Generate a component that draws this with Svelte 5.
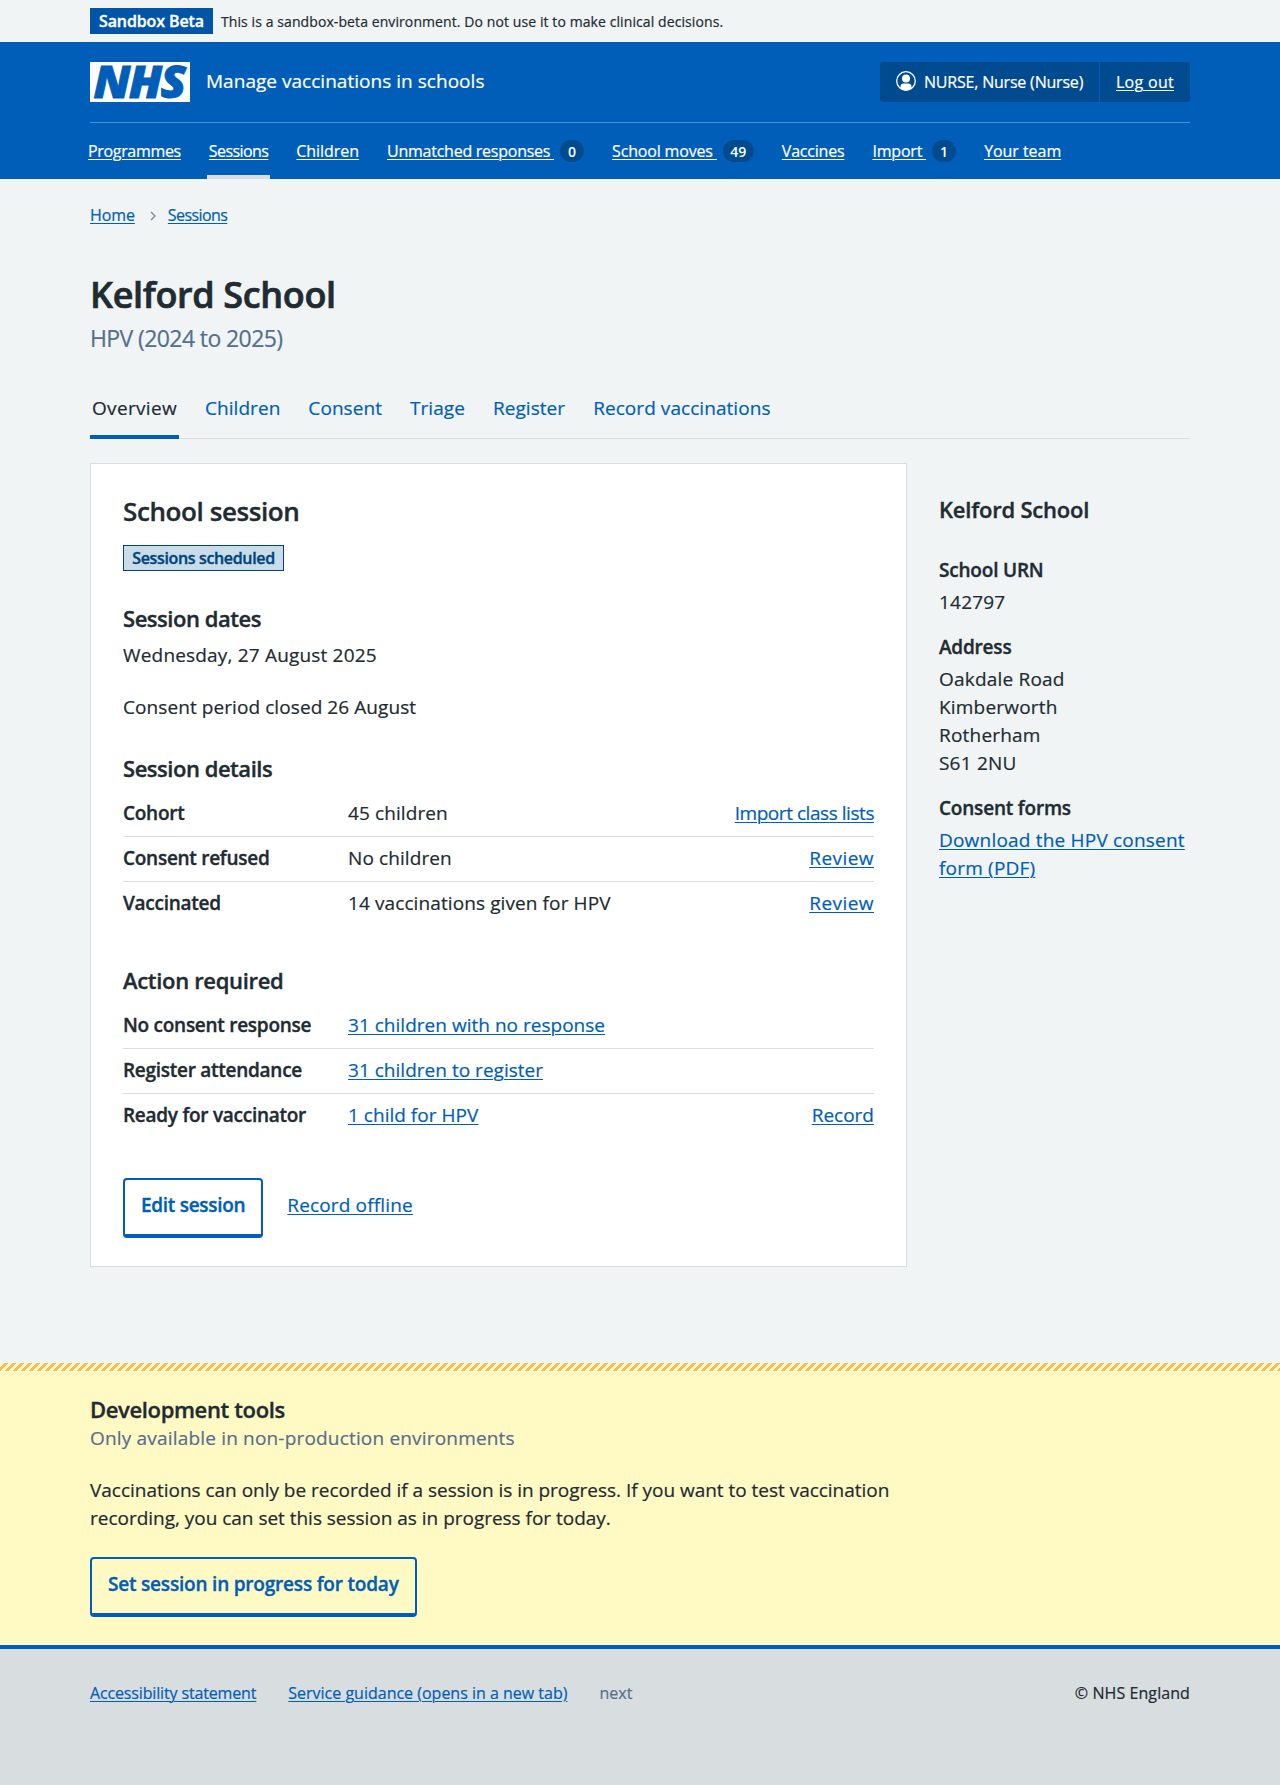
<script>
  const nav = [
    { label: 'Programmes', spacing: -0.33 },
    { label: 'Sessions', current: true, spacing: -0.58 },
    { label: 'Children', spacing: -0.05 },
    { label: 'Unmatched responses', count: 0, spacing: -0.25 },
    { label: 'School moves', count: 49, spacing: -0.17 },
    { label: 'Vaccines', spacing: -0.2 },
    { label: 'Import', count: 1, spacing: -0.2 },
    { label: 'Your team', spacing: -0.05 },
  ];

  const tabs = ['Overview', 'Children', 'Consent', 'Triage', 'Register', 'Record vaccinations'];

  const details = [
    { key: 'Cohort', value: '45 children', action: 'Import class lists', spacing: -0.45 },
    { key: 'Consent refused', value: 'No children', action: 'Review', spacing: 0.45 },
    { key: 'Vaccinated', value: '14 vaccinations given for HPV', action: 'Review', spacing: 0.45 },
  ];

  const actions = [
    { key: 'No consent response', link: '31 children with no response' },
    { key: 'Register attendance', link: '31 children to register' },
    { key: 'Ready for vaccinator', link: '1 child for HPV', action: 'Record', spacing: 0 },
  ];

  const address = ['Oakdale Road', 'Kimberworth', 'Rotherham', 'S61 2NU'];
</script>

{#snippet summary(rows)}
  <dl class="summary">
    {#each rows as row}
      <div class="row">
        <dt>{row.key}</dt>
        <dd>
          {#if row.link}<a href="#top">{row.link}</a>{:else}{row.value}{/if}
        </dd>
        {#if row.action}
          <dd class="action"><a href="#top" style="letter-spacing: {row.spacing}px">{row.action}</a></dd>
        {/if}
      </div>
    {/each}
  </dl>
{/snippet}

<div class="environment">
  <div class="container env-inner">
    <strong class="env-tag">Sandbox Beta</strong>
    <span class="env-text">This is a sandbox-beta environment. Do not use it to make clinical decisions.</span>
  </div>
</div>

<header>
  <div class="container">
    <div class="masthead">
      <svg class="logo" viewBox="0 0 100 40" role="img" aria-label="NHS">
        <rect width="100" height="40" fill="#fff" />
        <text class="logo-text" x="3.500" y="36" textLength="91" lengthAdjust="spacingAndGlyphs">NHS</text>
      </svg>
      <span class="service">Manage vaccinations in schools</span>
      <div class="account">
        <span class="user">
          <svg width="20" height="20" viewBox="0 0 20 20" aria-hidden="true">
            <circle cx="10" cy="10" r="9.3" fill="none" stroke="#fff" stroke-width="1.3" />
            <circle cx="10" cy="7.5" r="4" fill="#fff" />
            <path d="M4.500 17.500v-1.700c0-2 1.300-3.200 3.200-3.200h4.600c1.900 0 3.200 1.200 3.200 3.200v1.700c-3 2.600-8 2.600-11 0z" fill="#fff" />
          </svg>
          NURSE, Nurse (Nurse)
        </span>
        <span class="logout"><a href="#top">Log out</a></span>
      </div>
    </div>
    <nav class="primary">
      {#each nav as item}
        <div class="nav-item" class:current={item.current}>
          <a href="#top" style="letter-spacing: {item.spacing}px">{item.label}{item.count !== undefined ? '\u00a0' : ''}</a>
          {#if item.count !== undefined}<span class="badge">{item.count}</span>{/if}
        </div>
      {/each}
    </nav>
  </div>
</header>

<div class="container">
  <nav class="breadcrumb">
    <a href="#top">Home</a>
    <svg width="6" height="10" viewBox="0 0 6 10" aria-hidden="true">
      <path d="M1 1l4 4-4 4" fill="none" stroke="#768692" stroke-width="1.3" />
    </svg>
    <a href="#top" class="crumb-last">Sessions</a>
  </nav>

  <main>
    <h1>Kelford School</h1>
    <p class="caption">HPV (2024 to 2025)</p>

    <nav class="tabs">
      {#each tabs as tab, i}
        <a href="#top" class:selected={i === 0}>{tab}</a>
      {/each}
    </nav>

    <div class="columns">
      <section class="card">
        <h2>School session</h2>
        <strong class="tag">Sessions scheduled</strong>

        <h3 class="dates-title">Session dates</h3>
        <p class="date">Wednesday, 27 August 2025</p>
        <p class="period">Consent period closed 26 August</p>

        <h3>Session details</h3>
        {@render summary(details)}

        <h3 class="action-title">Action required</h3>
        {@render summary(actions)}

        <div class="buttons">
          <button class="edit">Edit session</button>
          <a href="#top">Record offline</a>
        </div>
      </section>

      <aside>
        <h3>Kelford School</h3>
        <dl>
          <dt>School URN</dt>
          <dd>142797</dd>
          <dt>Address</dt>
          <dd>
            {#each address as line}<div>{line}</div>{/each}
          </dd>
          <dt>Consent forms</dt>
          <dd><a href="#top">Download the HPV consent form (PDF)</a></dd>
        </dl>
      </aside>
    </div>
  </main>
</div>

<section class="devtools">
  <div class="container">
    <h3>Development tools</h3>
    <p class="muted">Only available in non-production environments</p>
    <p class="explain">
      Vaccinations can only be recorded if a session is in progress. If you want to test vaccination recording, you can
      set this session as in progress for today.
    </p>
    <button>Set session in progress for today</button>
  </div>
</section>

<footer>
  <div class="container footer-inner">
    <a href="#top" class="statement">Accessibility statement</a>
    <a href="#top">Service guidance (opens in a new tab)</a>
    <span class="version">next</span>
    <span class="copyright">© NHS England</span>
  </div>
</footer>

<style>
  :global(body) {
    background: #f0f4f5;
    color: #212b32;
    font: 400 19px/28px 'Open Sans', 'Noto Sans', sans-serif;
    -webkit-text-stroke: 0.2px;
  }
  :global(*) {
    box-sizing: border-box;
  }
  h1,
  h2,
  h3,
  p,
  dl,
  dd {
    margin: 0;
  }
  a {
    color: #005eb8;
    text-decoration-thickness: 1px;
    text-underline-offset: 2px;
  }
  .container {
    width: 1100px;
    margin: 0 auto;
  }

  .env-inner {
    display: flex;
    align-items: center;
    gap: 8px;
    height: 42px;
    font-size: 14px;
    line-height: 26px;
    letter-spacing: 0.09px;
  }
  .env-text {
    padding-top: 1px;
  }
  .env-tag {
    width: 123px;
    text-align: center;
    background: #0055a6;
    color: #fff;
    font-size: 16px;
    font-weight: 600;
    letter-spacing: -0.1px;
  }

  header {
    background: #005eb8;
    color: #fff;
  }
  header a {
    color: #fff;
  }
  .masthead {
    display: flex;
    align-items: center;
    height: 81px;
    border-bottom: 1px solid #4590d0;
  }
  .logo {
    width: 100px;
    height: 40px;
    overflow: visible;
  }
  .logo-text {
    font: italic 800 45px 'Open Sans', sans-serif;
    letter-spacing: -1.6px;
    fill: #005eb8;
    stroke: #005eb8;
    stroke-width: 0.9px;
  }
  .service {
    margin-left: 16px;
    padding-bottom: 2px;
    letter-spacing: 0.03px;
  }
  .account {
    display: flex;
    margin-left: auto;
    height: 40px;
    border-radius: 3px;
    overflow: hidden;
    background: #004b90;
    font-size: 16px;
    line-height: 24px;
  }
  .user {
    display: flex;
    gap: 8px;
    width: 220px;
    padding: 8px 0 8px 16px;
    border-right: 1px solid #005eb8;
    letter-spacing: -0.2px;
  }
  .user svg {
    margin-top: 1px;
  }
  .logout {
    padding: 8px 0;
    width: 90px;
    text-align: center;
    letter-spacing: 0.3px;
  }
  .primary {
    display: flex;
    gap: 24px;
    height: 56px;
    margin-left: -4px;
    font-size: 16px;
    line-height: 24px;
  }
  .nav-item {
    display: flex;
    padding: 16px 2px 12px;
    border-bottom: 4px solid transparent;
  }
  .current {
    border-color: #d8dde0;
  }
  .badge {
    min-width: 24px;
    height: 22px;
    margin: 1px 0 0 6px;
    padding: 0 7.5px;
    border-radius: 11px;
    background: #004b90;
    font-size: 14px;
    font-weight: 600;
    line-height: 23px;
    text-align: center;
    -webkit-text-stroke: 0;
  }

  .breadcrumb {
    display: flex;
    align-items: center;
    height: 24px;
    margin-top: 24px;
    font-size: 16px;
    line-height: 24px;
    letter-spacing: -0.1px;
  }
  .crumb-last {
    letter-spacing: -0.58px;
  }
  .breadcrumb svg {
    margin: 2px 12px 0 15px;
  }

  h1,
  h2,
  h3,
  dt,
  button,
  strong {
    -webkit-text-stroke: 0.35px;
  }
  h1 {
    margin-top: 45px;
    font-size: 36px;
    font-weight: 600;
    line-height: 45px;
    letter-spacing: -0.34px;
    -webkit-text-stroke: 0.7px;
  }
  .caption {
    margin-top: 5px;
    color: #566f8c;
    font-size: 23px;
    line-height: 32px;
    letter-spacing: -0.6px;
  }
  .tabs {
    display: flex;
    gap: 24px;
    height: 45px;
    margin-top: 40px;
    box-shadow: inset 0 -1px #d8dde0;
    letter-spacing: 0.06px;
  }
  .tabs a {
    padding: 0 2px;
    text-decoration: none;
  }
  .tabs .selected {
    color: #212b32;
    border-bottom: 4px solid #005eb8;
    letter-spacing: 0.32px;
  }

  .columns {
    display: flex;
    align-items: flex-start;
    gap: 32px;
    margin-top: 24px;
  }
  .card {
    width: 817px;
    padding: 32px 32px 28px;
    border: 1px solid #d8dde0;
    background: #fff;
  }
  h2 {
    font-size: 26px;
    font-weight: 600;
    line-height: 30px;
    letter-spacing: -0.4px;
  }
  h3 {
    font-size: 22px;
    font-weight: 600;
    line-height: 30px;
    letter-spacing: -0.47px;
  }
  .tag {
    display: block;
    width: 161px;
    margin-top: 19px;
    border: 1px solid #00437f;
    background: #c8dde7;
    color: #00437f;
    font-size: 16px;
    font-weight: 600;
    line-height: 24px;
    letter-spacing: -0.35px;
    text-align: center;
  }
  .dates-title {
    margin: 32px 0 8px;
  }
  .date {
    letter-spacing: 0.18px;
  }
  .period {
    margin: 24px 0 32px;
    letter-spacing: 0.08px;
  }
  .summary {
    margin-top: 9px;
  }
  .row {
    display: flex;
    height: 45px;
    padding-top: 7px;
    border-bottom: 1px solid #d8dde0;
    letter-spacing: 0.1px;
  }
  .row a {
    letter-spacing: 0.02px;
  }
  .row:last-child {
    border-bottom-color: transparent;
  }
  dt,
  button {
    font-weight: 600;
    letter-spacing: -0.2px;
  }
  .row dt {
    width: 225px;
    letter-spacing: -0.27px;
  }
  .action {
    margin-left: auto;
  }
  .action-title {
    margin-top: 38px;
    letter-spacing: -0.32px;
  }
  .buttons {
    display: flex;
    gap: 24px;
    margin-top: 39px;
    line-height: 28px;
    letter-spacing: 0.16px;
  }
  .buttons a {
    padding-top: 13px;
  }
  button {
    display: block;
    height: 60px;
    padding: 11px 16px 15px;
    border: 2px solid #005eb8;
    border-bottom-width: 4px;
    border-radius: 4px;
    background: none;
    color: #005eb8;
    font-family: inherit;
    font-size: 19px;
    line-height: 28px;
  }
  .edit {
    letter-spacing: -0.3px;
  }

  aside {
    width: 251px;
    padding-top: 31px;
    letter-spacing: 0.2px;
  }
  aside h3 {
    letter-spacing: -0.22px;
  }
  aside dl {
    margin-top: 32px;
  }
  aside dd {
    margin: 4px 0 17px;
  }

  .devtools {
    height: 282px;
    margin-top: 96px;
    padding-top: 31px;
    background: linear-gradient(-45deg, #f5bd5b 25%, transparent 25% 50%, #f5bd5b 50% 75%, transparent 75%) 0 0 / 8px 8px
      repeat-x #fff9c4;
  }
  .devtools h3 {
    letter-spacing: -0.36px;
  }
  .muted {
    color: #566f8c;
    letter-spacing: 0.18px;
  }
  .explain {
    width: 817px;
    margin: 24px 0 25px;
    letter-spacing: -0.02px;
  }

  footer {
    height: 140px;
    padding-top: 32px;
    border-top: 4px solid #005eb8;
    background: #d8dde0;
    font-size: 16px;
    line-height: 24px;
  }
  .footer-inner {
    display: flex;
    gap: 32px;
  }
  .statement {
    letter-spacing: -0.15px;
  }
  .version {
    color: #566f8c;
  }
  .copyright {
    margin-left: auto;
    letter-spacing: 0.08px;
  }
</style>
